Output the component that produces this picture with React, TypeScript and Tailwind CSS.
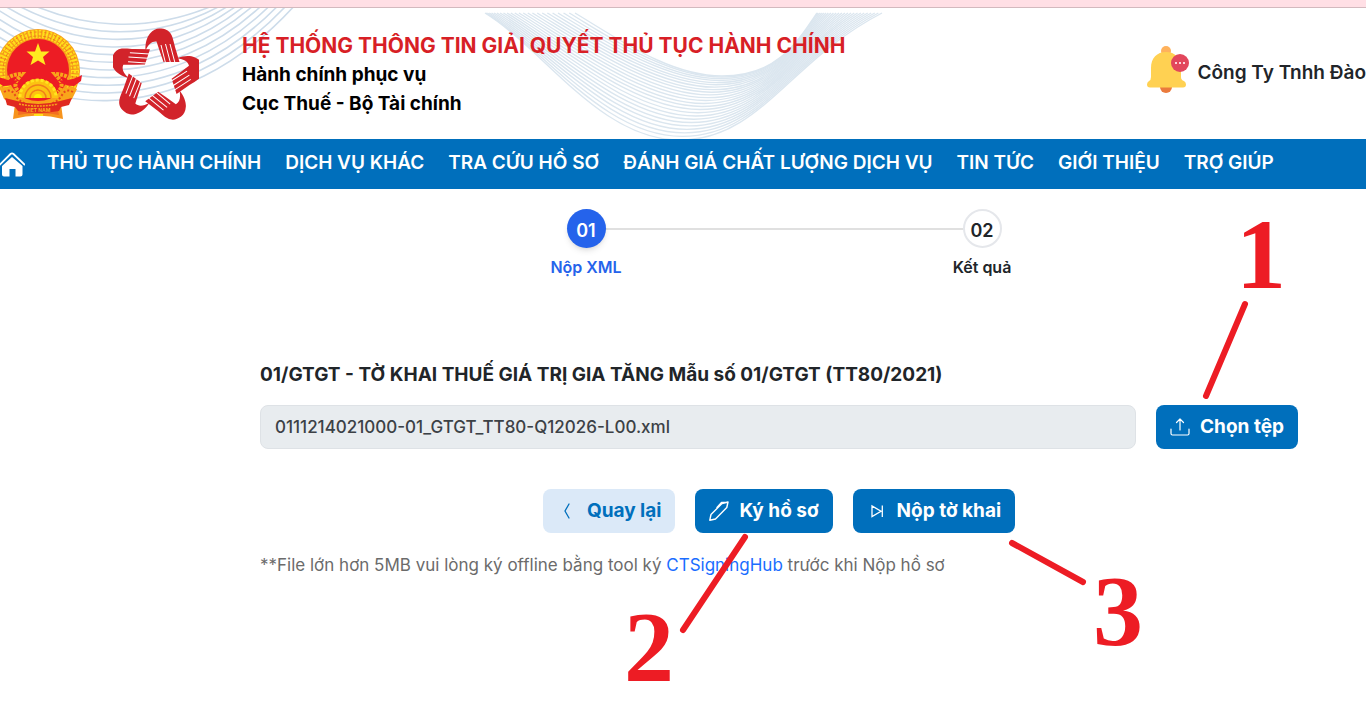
import { useState } from 'react'

const menu = [
  'THỦ TỤC HÀNH CHÍNH',
  'DỊCH VỤ KHÁC',
  'TRA CỨU HỒ SƠ',
  'ĐÁNH GIÁ CHẤT LƯỢNG DỊCH VỤ',
  'TIN TỨC',
  'GIỚI THIỆU',
  'TRỢ GIÚP',
]

// in-between curve of two paths that have the same commands,
// the first two points can run ahead of the rest
function mix(a: number[], b: number[], t: number, start = t) {
  const p = a.map((v, i) => v + (b[i] - v) * (i < 4 ? start : t))
  const [x, y, ...rest] = p
  return `M${x} ${y}C${rest.join(' ')}`
}

const leftTop = [10, -14, 80, 24, 150, 24, 212, -2]
const leftBottom = [-70, 10, 30, 120, 180, 125, 296, -4]
const rightTop = [575, 5, 620, 32, 670, 68, 722, 68, 775, 68, 795, 38, 817, 5]
const rightBottom = [485, 5, 545, 42, 600, 132, 680, 132, 760, 132, 790, 52, 882, 5]

function Waves() {
  return (
    <svg className="absolute left-0 top-0" width="900" height="131" viewBox="0 0 900 131" fill="none" aria-hidden="true">
      {Array.from({ length: 11 }, (_, i) => (
        <path key={i} d={mix(leftTop, leftBottom, i / 10)} stroke="#cddcea" strokeWidth="1.6" />
      ))}
      {Array.from({ length: 24 }, (_, i) => (
        <path key={i} d={mix(rightTop, rightBottom, (i / 23) ** 1.3, 1 - (1 - i / 23) ** 1.5)} stroke="#dbe6ef" strokeWidth="1.4" />
      ))}
    </svg>
  )
}

function Emblem() {
  return (
    <svg className="-ml-[5px] shrink-0" width="88" height="92" viewBox="0 0 88 92" aria-hidden="true">
      <path d="M20 76L18 91Q43 84 68 91L66 76Z" fill="#f7941d" />
      <path d="M24 78L23 87Q43 83 64 87L62 78Z" fill="#f36f21" />
      <circle cx="43" cy="43" r="42" fill="#f7a11b" />
      <circle cx="43" cy="43" r="37" fill="none" stroke="#ffe01a" strokeWidth="8" strokeDasharray="2 1.5" />
      <circle cx="43" cy="43" r="39" fill="none" stroke="#e8651c" strokeWidth=".8" strokeDasharray="2 3" />
      <circle cx="43" cy="43" r="35" fill="none" stroke="#e8651c" strokeWidth=".8" strokeDasharray="3 2" />
      <circle cx="43" cy="42" r="31" fill="#ed1c24" />
      <path d="M43 15L46 23.500H54.500L48 29L50.500 37L43 32.500L35.500 37L38 29L31.500 23.500H40Z" fill="#ffe920" />
      <path d="M6 56Q14 46 27 46L22 52Q18 58 24 64M81 56Q73 46 60 46L65 52Q69 58 63 64" fill="none" stroke="#f9a51a" strokeWidth="4" strokeDasharray="3 1" />
      <path d="M0 47Q12 54 24 52Q18 58 8 58L1 53ZM87 47Q75 54 63 52Q69 58 79 58L86 53Z" fill="#ed1c24" />
      <path d="M5 61Q10 57 17 61T28 71Q34 75 43 75T59 71Q62 65 69 61T82 61L77 71Q60 82 43 82T9 71Z" fill="#f9a51a" />
      <path d="M9 64Q16 60 20 67T32 76M78 64Q71 60 67 67T55 76" fill="none" stroke="#e8481c" strokeWidth="2" strokeDasharray="2 2" />
      <path d="M23 70A20 19 0 0 1 63 70Z" fill="#fcc211" />
      <path d="M25 69A18 17 0 0 1 61 69" fill="none" stroke="#ffe51e" strokeWidth="3" strokeDasharray="3 2" />
      <path d="M30 70A13 13 0 0 1 56 70" fill="none" stroke="#f07f1a" strokeWidth="1.500" />
      <path d="M35 70A8 8 0 0 1 51 70" fill="none" stroke="#f07f1a" strokeWidth="1.500" />
      <path d="M39 70A4 4 0 0 1 47 70Z" fill="#fff200" />
      <path d="M10 70L22 73Q43 79 65 73L77 70L74 77L66 79L64 83Q43 87 23 83L20 79L12 77Z" fill="#e02a1f" />
      <path d="M24 76Q43 80 63 76" fill="none" stroke="#f9a51a" strokeWidth="1.500" strokeDasharray="2 1" />
      <text x="43" y="83.500" textAnchor="middle" fontSize="5" fontWeight="700" fill="#f9b51a">VIỆT NAM</text>
      <path d="M39 87H48" stroke="#ffe01a" strokeWidth="2" />
    </svg>
  )
}

function HandsLogo() {
  return (
    <svg className="shrink-0" width="86" height="92" viewBox="112 28 86 92" aria-hidden="true">
      {[0, 72, 144, 216, 288].map((deg) => (
        <g key={deg} transform={`rotate(${deg} 155 76)`}>
          <path d="M144.500 50.500C144 43 146 37 149 33.500C152 30 155 28.500 158.500 28.500C164 28.500 168 30 170.500 35C172 38 173 43 174 47L178.500 62L162.500 62L159 52L155.500 41.500C151 41 147.500 44 144.500 50.500Z" fill="#d2232a" />
          <path d="M160 45L164.500 63M164.500 44L169.500 63M169 44L174 63" stroke="#fff" strokeWidth="1" />
        </g>
      ))}
    </svg>
  )
}

function Bell() {
  return (
    <svg className="mb-2" width="42" height="49" viewBox="0 0 42 49" aria-hidden="true">
      <circle cx="19" cy="6" r="5" fill="#ffb25c" />
      <circle cx="19" cy="42" r="6" fill="#ea7a3c" />
      <path d="M4 23C4 13 10 7 19 7S34 13 34 23V32Q34 35 37 36Q39 37 39 39.500Q39 42.500 36 42.500H3Q0 42.500 0 39.500Q0 37 2 36Q4 35 4 32Z" fill="#ffd152" />
      <circle cx="33" cy="18" r="9" fill="#e2475c" />
      <path d="M28 18H30M32 18H34M36 18H38" stroke="#fbd5da" strokeWidth="2" />
    </svg>
  )
}

function HomeIcon() {
  return (
    <svg width="25" height="25" viewBox="0 0 25 25" aria-hidden="true">
      <path d="M-1 13.500L10.500 2Q12 .7 13.500 2L25 13" fill="none" stroke="#fff" strokeWidth="1.800" />
      <path d="M2 14L12 5L22.500 14V22.500Q22.500 24.500 20.500 24.500H15.500V17H9.500V24.500H4Q2 24.500 2 22.500Z" fill="#fff" />
    </svg>
  )
}

function UploadIcon() {
  return (
    <svg width="20" height="20" viewBox="0 0 20 20" fill="none" stroke="currentColor" strokeWidth="1.200" strokeLinecap="round" strokeLinejoin="round" aria-hidden="true">
      <path d="M10 13V2M6.500 5.500L10 2L13.500 5.500M1 12V16.500Q1 18 2.500 18H17.500Q19 18 19 16.500V12" />
    </svg>
  )
}

function BackIcon() {
  return (
    <svg width="20" height="20" viewBox="0 0 20 20" fill="none" stroke="currentColor" strokeWidth="1.300" strokeLinecap="round" aria-hidden="true">
      <path d="M12 3L8 10L12 17" />
    </svg>
  )
}

function PenIcon() {
  return (
    <svg width="20" height="20" viewBox="0 0 20 20" fill="none" stroke="currentColor" strokeWidth="1.400" strokeLinejoin="round" strokeLinecap="round" aria-hidden="true">
      <path d="M.8 19.200L2 13.500L13 2.500L19 1L17.800 6.500L6.500 18ZM8 6.500L12.500 1.500H19" />
    </svg>
  )
}

function SubmitIcon() {
  return (
    <svg width="20" height="20" viewBox="0 0 20 20" fill="none" stroke="currentColor" strokeWidth="1.300" aria-hidden="true">
      <path d="M5 5V15.500L14 10.200ZM15.300 4.500V16" />
    </svg>
  )
}

function Header() {
  return (
    <header className="relative flex h-[131px] items-center overflow-hidden bg-white">
      <Waves />
      <div className="relative flex shrink-0 items-center">
        <Emblem />
        <div className="ml-[30px]"><HandsLogo /></div>
        <div className="ml-[43px] whitespace-nowrap pt-[2px] text-[19px] font-bold leading-[29px] text-black">
          <h1 className="text-[21px] leading-[29px] text-[#d81f26]">HỆ THỐNG THÔNG TIN GIẢI QUYẾT THỦ TỤC HÀNH CHÍNH</h1>
          <p>Hành chính phục vụ</p>
          <p>Cục Thuế - Bộ Tài chính</p>
        </div>
      </div>
      <div className="relative ml-auto flex shrink-0 items-center gap-2">
        <Bell />
        <span className="whitespace-nowrap text-[19px] font-semibold">Công Ty Tnhh Đào</span>
      </div>
    </header>
  )
}

export default function App() {
  const [fileName, setFileName] = useState('0111214021000-01_GTGT_TT80-Q12026-L00.xml')
  const button = 'flex h-11 shrink-0 items-center gap-[10px] whitespace-nowrap rounded-lg px-[14px] text-[19px] font-bold'

  return (
    <div className="relative min-h-screen overflow-hidden bg-white font-['Inter',sans-serif] text-[#212529]">
      <div className="h-2 border-b border-[#d3b9be] bg-[#ffdfe5]"></div>
      <Header />
      <nav className="flex h-[50px] items-center bg-[#006fbc] text-[19px] font-semibold text-white">
        <a href="#" aria-label="Trang chủ" className="mr-[22px] shrink-0"><HomeIcon /></a>
        <div className="flex gap-6 whitespace-nowrap">
          {menu.map((item) => <a key={item} href="#" className="pb-[2px]">{item}</a>)}
        </div>
      </nav>

      <main className="pl-[202px]">
        <ol className="relative mx-auto mt-5 grid w-[792px] grid-cols-2 text-base font-semibold">
          <li className="flex flex-col items-center text-[#2563eb]">
            <span className="z-10 flex size-[39px] items-center justify-center rounded-full bg-[#2563eb] pt-1 text-lg text-white shadow-md">01</span>
            <span className="mt-[7px] leading-6">Nộp XML</span>
          </li>
          <li className="flex flex-col items-center">
            <span className="z-10 flex size-[39px] items-center justify-center rounded-full border-2 border-gray-200 bg-white pt-1 text-lg">02</span>
            <span className="mt-[7px] leading-6">Kết quả</span>
          </li>
          <li aria-hidden="true" className="absolute left-1/4 right-1/4 top-[19px] h-[2px] bg-[#e0e0e0]"></li>
        </ol>

        <form className="mt-[82px] pl-[58px] pr-[68px]" onSubmit={(e) => e.preventDefault()}>
          <label htmlFor="file" className="block text-[19px] font-bold leading-7">01/GTGT - TỜ KHAI THUẾ GIÁ TRỊ GIA TĂNG Mẫu số 01/GTGT (TT80/2021)</label>
          <div className="mt-4 flex gap-5">
            <input
              id="file"
              type="text"
              readOnly
              value={fileName}
              onChange={(e) => setFileName(e.target.value)}
              className="h-11 min-w-0 flex-1 rounded-lg border border-[#dee2e6] bg-[#e8ecef] px-[14px] text-[17px] font-medium text-[#3c4146]"
            />
            <button type="button" className={`${button} bg-[#006fbc] text-white`}><UploadIcon />Chọn tệp</button>
          </div>
          <div className="mt-10 flex justify-center gap-5">
            <button type="button" className={`${button} bg-[#dbe9f8] text-[#006fbc]`}><BackIcon />Quay lại</button>
            <button type="button" className={`${button} bg-[#006fbc] text-white`}><PenIcon />Ký hồ sơ</button>
            <button type="submit" className={`${button} bg-[#006fbc] text-white`}><SubmitIcon />Nộp tờ khai</button>
          </div>
          <p className="mt-[18px] text-[17px] leading-7 text-[#6b6b6b]">
            **File lớn hơn 5MB vui lòng ký offline bằng tool ký <a href="#" className="text-[#1a6dff]">CTSigningHub</a> trước khi Nộp hồ sơ
          </p>
        </form>
      </main>

      {/* guide marks drawn over the page */}
      <div className="pointer-events-none absolute left-0 top-0 font-['Liberation_Serif',serif] text-[100px] font-bold leading-none text-[#ed1c24]">
        <svg width="1366" height="715" viewBox="0 0 1366 715" aria-hidden="true">
          <path d="M1245 304L1206 396M745 537L683 630M1012 543L1083 582" stroke="#ed1c24" strokeWidth="6" strokeLinecap="round" />
        </svg>
        <span className="absolute left-[1236px] top-[205px]">1</span>
        <span className="absolute left-[624px] top-[597px]">2</span>
        <span className="absolute left-[1093px] top-[561px]">3</span>
      </div>
    </div>
  )
}
